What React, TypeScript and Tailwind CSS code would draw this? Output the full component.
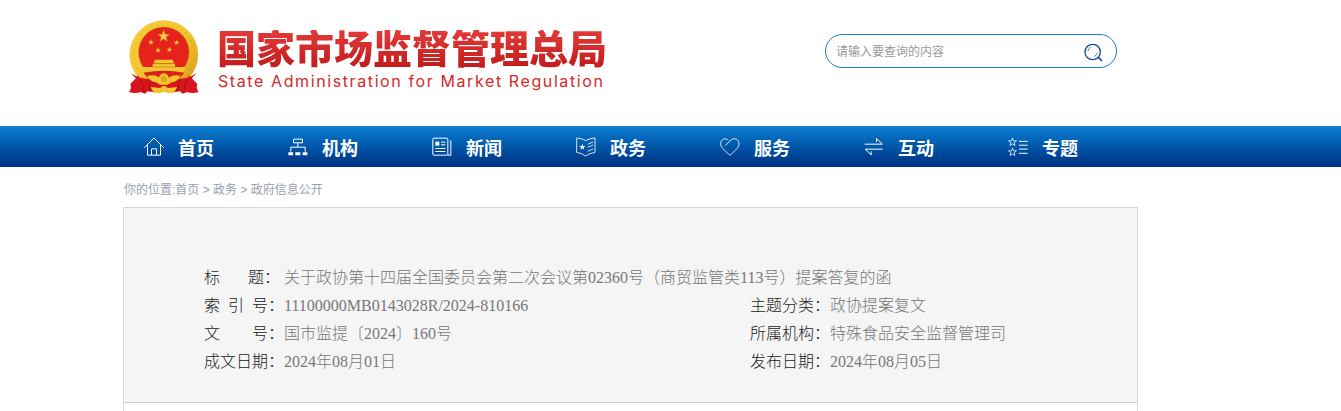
import type { ReactNode } from 'react';

const STAR = 'M0 -10 L2.4 -3.2 L9.5 -3.1 L3.8 1.2 L5.9 8.1 L0 4 L-5.9 8.1 L-3.8 1.2 L-9.5 -3.1 L-2.4 -3.2 Z';

function NavIcon({ viewBox, children }: { viewBox: string; children: ReactNode }) {
  return (
    <svg viewBox={viewBox} className="size-5 shrink-0" fill="none" stroke="currentColor" strokeWidth="3" aria-hidden="true">
      {children}
    </svg>
  );
}

const navItems: { label: string; icon: ReactNode }[] = [
  {
    label: '首页',
    icon: (
      <NavIcon viewBox="72 52 60 60">
        <path d="M73 84 L102 55 L131 84" />
        <path d="M82.5 76 V106.5 H121.5 V76 M94.5 106 V87.5 H109.5 V106" />
      </NavIcon>
    ),
  },
  {
    label: '机构',
    icon: (
      <NavIcon viewBox="503 52 60 60">
        <path d="M519.5 58.5 H546.5 V69.5 H519.5 Z M532.5 70 V82 M511.5 96 V82.5 H554.5 V96" />
        <path d="M504 98 H518 V107 H504 Z M525 98 H540 V107 H525 Z M547 98 H561 V107 H547 Z" fill="currentColor" stroke="none" />
      </NavIcon>
    ),
  },
  {
    label: '新闻',
    icon: (
      <NavIcon viewBox="35 52 60 60">
        <rect x="37.5" y="55.5" width="45" height="51" rx="3" />
        <path d="M91.5 62 V106.5 H82 M62 67.5 H75 M62 75.5 H75 M45 86.5 H75 M45 95.5 H75" />
        <rect x="45" y="66" width="12" height="12" fill="currentColor" stroke="none" />
      </NavIcon>
    ),
  },
  {
    label: '政务',
    icon: (
      <NavIcon viewBox="467 52 60 60">
        <path d="M469 55 Q486 56 496 63 Q507 56 524 55 V98 Q507 101 496 109 Q486 101 469 98 Z" strokeWidth="2.5" />
        <path d="M502 74 L518 67 M502 83 L518 76 M502 95 L518 88" strokeWidth="2.5" />
        <path d={STAR} transform="translate(486 82)" fill="currentColor" stroke="none" />
      </NavIcon>
    ),
  },
  {
    label: '服务',
    icon: (
      <NavIcon viewBox="61 52 60 60">
        <path d="M77 77 L94 61 C104 53 118 58 118 73 C118 85 100 98 91 107 C82 98 63 85 63 73 C63 57 77 54 86 61" strokeWidth="2.5" />
      </NavIcon>
    ),
  },
  {
    label: '互动',
    icon: (
      <NavIcon viewBox="490 52 60 60">
        <path d="M492 73.5 H545 L527.5 56 V67 M546 88.5 H494 L511.5 106 V95" />
      </NavIcon>
    ),
  },
  {
    label: '专题',
    icon: (
      <NavIcon viewBox="923 52 62 60">
        <path d={STAR} transform="translate(937 67) scale(1.3)" strokeWidth="1.8" />
        <path d={STAR} transform="translate(937 98) scale(1.3)" strokeWidth="1.8" />
        <path d="M957 64.5 H984 M957 76.5 H984 M957 88.5 H984 M957 101.5 H984" />
      </NavIcon>
    ),
  },
];

function Emblem() {
  return (
    <svg viewBox="27 30 210 225" className="h-[75px] w-[70px] shrink-0" role="img" aria-label="国徽">
      <defs>
        <linearGradient id="gold" x1="0" y1="0" x2="1" y2="1">
          <stop offset="0" stopColor="#f6cf3e" />
          <stop offset="0.5" stopColor="#f4c42d" />
          <stop offset="1" stopColor="#d99a17" />
        </linearGradient>
      </defs>
      <circle cx="131.5" cy="134" r="103" fill="url(#gold)" />
      <circle cx="131.5" cy="134" r="91" fill="none" stroke="#c88f14" strokeWidth="5" strokeDasharray="4 11" opacity="0.3" />
      <circle cx="131.5" cy="127" r="77" fill="#c58b14" />
      <circle cx="131.5" cy="127" r="75" fill="#e5221b" />
      <g fill="#f6ce45" stroke="#b87512" strokeWidth="0.5">
        <path d={STAR} transform="translate(131 79) scale(1.9)" />
        <path d={STAR} transform="translate(93 97) scale(0.9)" />
        <path d={STAR} transform="translate(170 98) scale(0.9)" />
        <path d={STAR} transform="translate(114 121) scale(0.9)" />
        <path d={STAR} transform="translate(148 119) scale(0.9)" />
      </g>
      <path d="M105 149 H158 L162 160 H101 Z M98 161 H165 V171 H98 Z M66 171 H197 L190 187 H73 Z" fill="#f3c833" />
      <path d="M101 161 H162 M97 171 H166" stroke="#bd7914" strokeWidth="2" />
      <path d="M70 188 Q132 176 193 188 L180 203 H83 Z" fill="#dc1f1c" />
      <path d="M33 190 Q61 208 91 207 L104 247 L83 244 L75 251 L61 246 L54 247 Q66 218 33 190 Z" fill="#d8151c" />
      <path d="M230 190 Q202 208 172 207 L159 247 L180 244 L188 251 L202 246 L209 247 Q197 218 230 190 Z" fill="#d8151c" />
      <path d="M31 222 L56 196 L62 246 Q46 252 27 246 Q36 234 31 222 Z M232 222 L207 196 L201 246 Q217 252 236 246 Q227 234 232 222 Z" fill="#d8151c" />
      <path d="M60 209 Q72 222 72 247 M81 209 Q92 225 90 244 M203 209 Q191 222 191 247 M182 209 Q171 225 173 244" stroke="#9b1017" strokeWidth="3" fill="none" />
      <path d="M91 204 Q131 239 172 204 L180 220 L163 234 H101 L83 220 Z" fill="#d8151c" />
      <path d="M82 197 Q108 193 116 203 Q122 190 132 190 Q141 190 147 203 Q158 193 181 197 Q174 215 155 217 L143 224 H120 L108 217 Q89 215 82 197 Z" fill="#f4c62e" />
      <circle cx="131.5" cy="207" r="9" fill="#dda41f" />
      <path d="M91 231 L120 234 Q132 222 144 234 L172 231 L161 248 L143 250 Q132 240 121 250 L102 248 Z" fill="#f3c62f" />
    </svg>
  );
}

type Field = { label: string; value: string };

const rows: Field[][] = [
  [{ label: '标\u00a0\u00a0\u00a0\u00a0\u00a0\u00a0\u00a0题：', value: '关于政协第十四届全国委员会第二次会议第02360号（商贸监管类113号）提案答复的函' }],
  [
    { label: '索\u00a0\u00a0引\u00a0\u00a0号：', value: '11100000MB0143028R/2024-810166' },
    { label: '主题分类：', value: '政协提案复文' },
  ],
  [
    { label: '文\u00a0\u00a0\u00a0\u00a0\u00a0\u00a0\u00a0\u00a0号：', value: '国市监提〔2024〕160号' },
    { label: '所属机构：', value: '特殊食品安全监督管理司' },
  ],
  [
    { label: '成文日期：', value: '2024年08月01日' },
    { label: '发布日期：', value: '2024年08月05日' },
  ],
];

export default function App() {
  return (
    <div className="min-h-screen bg-white font-['Liberation_Sans','Noto_Sans_CJK_SC',sans-serif]">
      <header className="mx-auto w-full max-w-[1095px]">
        <div className="flex h-[126px] max-w-[1015px] items-start justify-between pr-[21px] pl-1.5">
          <a href="#" className="mt-5 flex items-start gap-[18px]">
            <Emblem />
            <span className="mt-2.5 flex flex-col">
              <span className="bg-gradient-to-b from-[#e23a38] to-[#c2191b] bg-clip-text font-['Liberation_Sans','Noto_Sans_CJK_SC',sans-serif] text-[39px] leading-[39px] font-black text-transparent">
                国家市场监督管理总局
              </span>
              <span className="pl-px font-['Inter',sans-serif] text-base leading-6 tracking-widest text-[#d22a2a]">
                State Administration for Market Regulation
              </span>
            </span>
          </a>
          <form role="search" className="mt-[34px] flex h-[34px] w-[292px] items-center rounded-full border border-[#1a7ccc] pr-3 pl-2.5">
            <input
              type="text"
              aria-label="请输入要查询的内容"
              placeholder="请输入要查询的内容"
              className="min-w-0 flex-1 bg-transparent pt-0.5 text-xs text-gray-700 outline-none placeholder:text-[#999]"
            />
            <button type="button" aria-label="搜索" className="pt-1 text-[#124a96]">
              <svg viewBox="808 55 60 60" className="size-5" fill="none" stroke="currentColor" strokeWidth="4" aria-hidden="true">
                <circle cx="834" cy="82" r="23" />
                <path d="M851 98 L862 109" strokeWidth="5" />
                <path d="M819 80 Q821 71 829 67 M848 84 Q846 92 838 96" strokeWidth="2" />
              </svg>
            </button>
          </form>
        </div>
      </header>

      <nav className="bg-gradient-to-b from-[#0f7fd3] to-[#002f80]">
        <ul className="mx-auto flex w-full max-w-[1095px]">
          {navItems.map((item) => (
            <li key={item.label} className="w-36">
              <a href="#" className="flex h-[41px] items-center gap-3.5 pl-[21px] text-white">
                {item.icon}
                <span className="pt-1 text-lg font-bold">{item.label}</span>
              </a>
            </li>
          ))}
        </ul>
      </nav>

      <main className="mx-auto w-full max-w-[1095px]">
        <div className="flex h-10 items-center pt-1.5 pl-px text-xs text-[#9a9fae]">
          <span>你的位置:</span>
          <a href="#">首页</a>
          <span className="whitespace-pre"> &gt; </span>
          <a href="#">政务</a>
          <span className="whitespace-pre"> &gt; </span>
          <a href="#">政府信息公开</a>
        </div>
        <section className="min-h-[204px] max-w-[1015px] border border-b-0 border-[#d3dbe6]">
          <div className="border-b border-[#ccc] bg-[#f5f5f5] pt-14 pb-[26px] pl-20">
            <table className="w-full table-fixed text-left font-['Liberation_Serif','Noto_Sans_CJK_SC',serif] text-base leading-7">
              <colgroup>
                <col className="w-20" />
                <col className="w-[466px]" />
                <col className="w-20" />
                <col />
              </colgroup>
              <tbody>
                {rows.map((fields) => (
                  <tr key={fields[0].label}>
                    {fields.map((field) => [
                      <th key={field.label} scope="row" className="p-0 font-light whitespace-nowrap text-[#222]">
                        {field.label}
                      </th>,
                      <td key={field.value} colSpan={fields.length === 1 ? 3 : 1} className="p-0 font-light text-[#777]">
                        {field.value}
                      </td>,
                    ])}
                  </tr>
                ))}
              </tbody>
            </table>
          </div>
        </section>
      </main>
    </div>
  );
}
